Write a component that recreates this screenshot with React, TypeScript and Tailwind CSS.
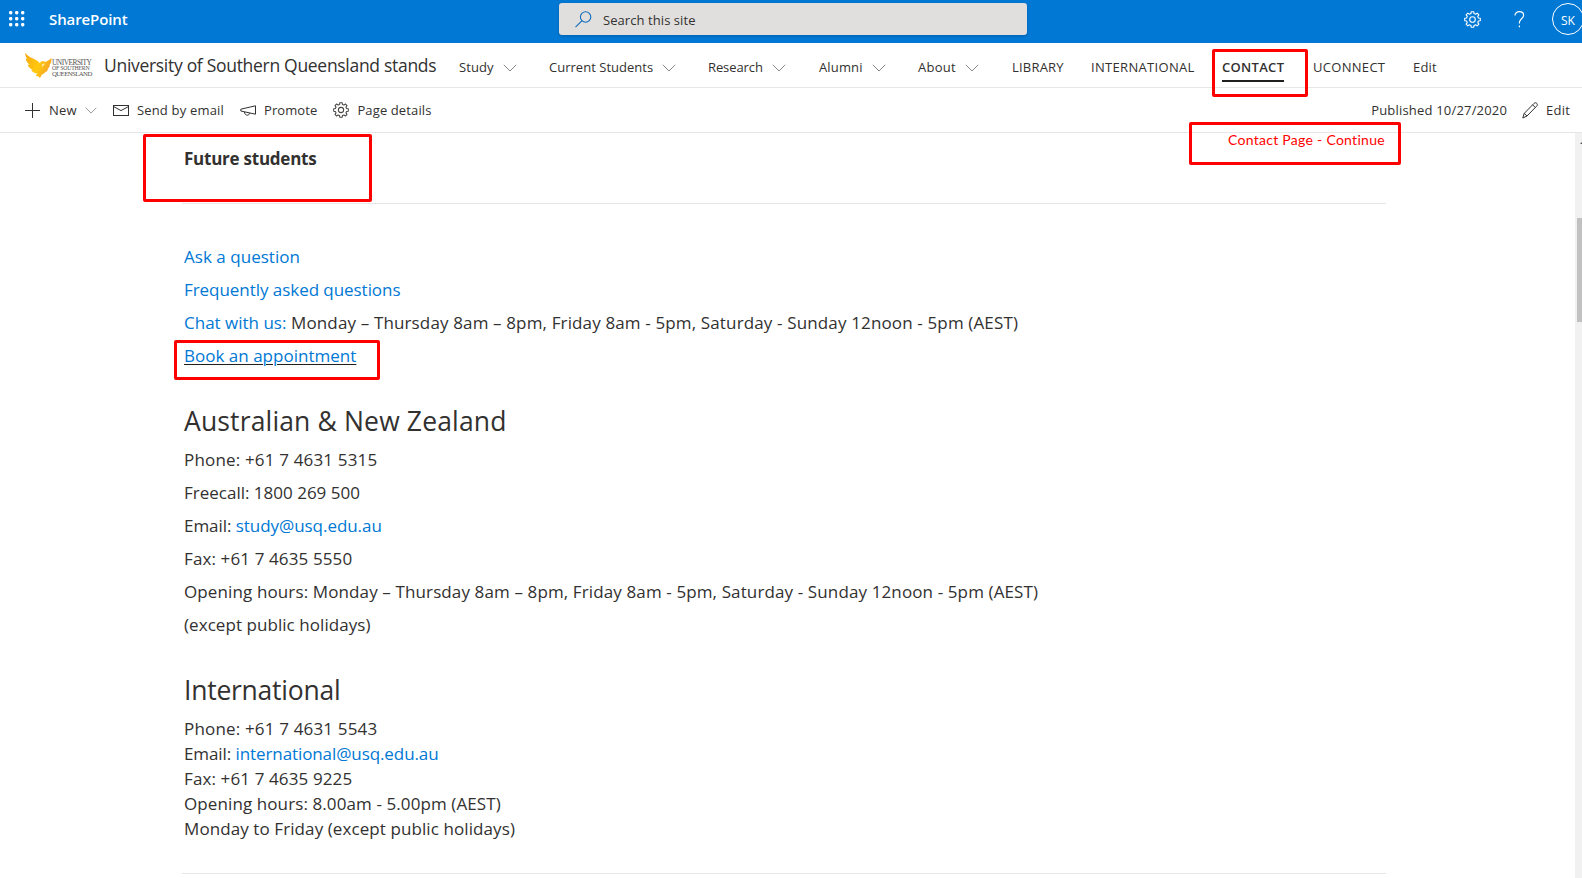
import type { ReactNode } from "react";

function Chevron({ className = "" }: { className?: string }) {
  return (
    <svg className={className} width="14" height="8" viewBox="0 0 14 8" fill="none" stroke="#8a8886" strokeWidth="1">
      <path d="M0.8 0.8 L7 7 L13.2 0.8" />
    </svg>
  );
}

function gearPath(cx: number, cy: number, outer: number, inner: number, teeth: number) {
  const points: string[] = [];
  const step = (Math.PI * 2) / teeth;
  for (let i = 0; i < teeth; i++) {
    const a = i * step - Math.PI / 2;
    const spots: [number, number][] = [
      [a - step * 0.32, inner],
      [a - step * 0.2, outer],
      [a + step * 0.2, outer],
      [a + step * 0.32, inner],
    ];
    for (const [t, r] of spots) {
      points.push(`${(cx + r * Math.cos(t)).toFixed(2)} ${(cy + r * Math.sin(t)).toFixed(2)}`);
    }
  }
  return `M${points.join("L")}Z`;
}

function Gear({ color, size, hub }: { color: string; size: number; hub: number }) {
  return (
    <svg width={size} height={size} viewBox="0 0 17 17" fill="none" stroke={color} strokeWidth="1.1" strokeLinejoin="round">
      <path d={gearPath(8.5, 8.5, 7.9, 6.1, 8)} />
      <circle cx="8.5" cy="8.5" r={hub} />
    </svg>
  );
}

function Logo() {
  return (
    <div className="flex h-[28px] w-[70px] items-center">
      <svg width="27" height="27" viewBox="0 0 28 27" className="shrink-0">
        <defs>
          <linearGradient id="phoenix" x1="0" x2="1" y1="0" y2="0.4">
            <stop offset="0" stopColor="#f7a814" />
            <stop offset="0.6" stopColor="#ffc90e" />
            <stop offset="1" stopColor="#f5a623" />
          </linearGradient>
        </defs>
        <path
          fill="url(#phoenix)"
          d="M0.2 0.3 C3 4.5 8 5.6 12.2 8.2 C13.8 9.2 15 10.2 15.6 11.4 C16 9.8 16.4 9.4 17.6 9.2 C19.2 8.8 20.6 9 21.6 9.8 C23.4 8.4 25.6 7.8 27.4 5.4 C27.8 9 26.8 11.2 25.6 12.6 C26 14.4 24.8 16 23.6 16.6 C24 18.4 22.8 19.6 21.2 20.2 C20 21.6 18.2 22.4 17.4 23 L15.6 26.4 L13.6 24.6 L11 24.4 L12.8 21.8 C9.8 21.4 7.4 20 6.4 17.8 L8 17.4 C5 16.8 3.2 14.8 2.8 12.4 L5 12.6 C2.2 10.8 0.8 8.6 0.8 6 L2.4 6.8 C0.8 4.8 0 2.6 0.2 0.3Z"
        />
        <path d="M17.4 13 C18.4 11.6 20 11.2 21 12 L19.2 12.8 L18.6 15.4Z" fill="#fff3c4" />
      </svg>
      <div className="flex flex-col whitespace-nowrap pt-[7px] font-['Liberation_Serif',serif] text-[7.4px] leading-[5.7px] text-[#55524f]">
        <span className="tracking-[-0.5px]">UNIVERSITY</span>
        <span className="text-[5.8px] tracking-[-0.22px]">OF SOUTHERN</span>
        <span className="text-[6.8px] tracking-[-0.6px]">QUEENSLAND</span>
      </div>
    </div>
  );
}

function NavItem({ label, menu = false, className }: { label: string; menu?: boolean; className: string }) {
  return (
    <div className={`flex h-full shrink-0 items-center whitespace-nowrap ${className}`}>
      <span className="pt-[2px]">{label}</span>
      {menu && <Chevron className="ml-[9px] mt-[3px]" />}
    </div>
  );
}

function Frame({ className }: { className: string }) {
  return <div className={`pointer-events-none absolute rounded-[2px] border-3 border-[#ff0000] ${className}`} />;
}

function Line({ children, className = "" }: { children: ReactNode; className?: string }) {
  return <p className={`h-[33px] leading-[33px] ${className}`}>{children}</p>;
}

const link = "text-[#0078d4]";

export default function App() {
  return (
    <div className="relative flex h-[878px] w-[1582px] flex-col overflow-hidden bg-white font-['Open_Sans',sans-serif] text-[13px] text-[#323130]">
      <header className="flex h-[43px] shrink-0 items-start bg-[#0078d4] text-white">
        <svg className="ml-[9px] mt-[11px] shrink-0" width="16" height="16" viewBox="0 0 16 16" fill="#fff">
          {[0, 6, 12].map((y) => [0, 6, 12].map((x) => <rect key={`${x}-${y}`} x={x} y={y} width="3.4" height="3.4" rx="1.4" />))}
        </svg>
        <span className="ml-[24px] w-[510px] shrink-0 text-[15px] font-semibold leading-[38px] tracking-[-0.1px]">SharePoint</span>
        <div className="mt-[3px] flex h-[32px] w-[468px] shrink-0 items-center rounded-[3px] bg-[#e1dfdd] text-[#323130] shadow-[0_1px_3px_rgba(0,0,0,0.2)]">
          <svg className="ml-[16px]" width="17" height="17" viewBox="0 0 17 17" fill="none" stroke="#0f6cbd" strokeWidth="1.1">
            <circle cx="10.6" cy="6" r="5.2" />
            <path d="M6.8 9.8 L0.5 16.2" />
          </svg>
          <span className="ml-[11px] mt-[3px] tracking-[0.07px]">Search this site</span>
        </div>
        <div className="ml-[437px] mt-[11px] shrink-0">
          <Gear color="#fff" size={17} hub={2.8} />
        </div>
        <svg className="ml-[33px] mt-[11px] shrink-0" width="11" height="17" viewBox="0 0 11 17" fill="none" stroke="#fff" strokeWidth="1.2">
          <path d="M1 4.6 C1 2 2.8 0.7 5.3 0.7 C8 0.7 9.6 2.2 9.6 4.3 C9.6 7.6 5.4 7.8 5.4 11.4 V12.4" />
          <path d="M5.4 14.6 V16.2" />
        </svg>
        <div className="ml-[27px] mt-[3px] flex size-[32px] shrink-0 items-center justify-center rounded-full border border-white pt-[3px] text-[12px]">
          SK
        </div>
      </header>

      <nav className="flex h-[45px] shrink-0 items-center border-b border-[#e6e6e6] pl-[25px]">
        <Logo />
        <span className="ml-[9px] w-[355px] shrink-0 whitespace-nowrap pt-px text-[17.5px] tracking-[-0.3px]">
          University of Southern Queensland stands
        </span>
        <div className="flex h-[43px] pt-[3px]">
          <NavItem label="Study" menu className="w-[90px] tracking-[0.1px]" />
          <NavItem label="Current Students" menu className="w-[159px] tracking-[0.02px]" />
          <NavItem label="Research" menu className="w-[111px] tracking-[-0.1px]" />
          <NavItem label="Alumni" menu className="w-[99px] tracking-[0.15px]" />
          <NavItem label="About" menu className="w-[94px] tracking-[0.25px]" />
          <NavItem label="LIBRARY" className="w-[79px] tracking-[0.2px]" />
          <NavItem label="INTERNATIONAL" className="w-[131px] tracking-[0.32px]" />
          <div className="flex h-full w-[91px] shrink-0 flex-col items-start pt-[10px] font-semibold tracking-[0.3px]">
            <span className="border-b-2 border-[#201f1e] pb-[3px] leading-[20px]">CONTACT</span>
          </div>
          <NavItem label="UCONNECT" className="w-[100px] tracking-[0.3px]" />
          <NavItem label="Edit" className="tracking-[0.2px]" />
        </div>
      </nav>

      <div className="flex h-[45px] shrink-0 items-center border-b border-[#e6e6e6] pl-[25px] pr-[12px]">
        <svg width="15" height="15" viewBox="0 0 15 15" stroke="#323130" strokeWidth="1">
          <path d="M7.5 0 V15 M0 7.5 H15" />
        </svg>
        <span className="ml-[9px] pt-[2px] tracking-[0.25px]">New</span>
        <Chevron className="ml-[8px] h-[7px] w-[12px]" />
        <svg className="ml-[16px]" width="16" height="11" viewBox="0 0 16 11" fill="none" stroke="#323130" strokeWidth="1">
          <rect x="0.5" y="0.5" width="15" height="10" />
          <path d="M0.6 1.6 L8 5.6 L15.4 1.6" />
        </svg>
        <span className="ml-[8px] pt-[2px] tracking-[0.18px]">Send by email</span>
        <svg className="ml-[16px]" width="17" height="11" viewBox="0 0 17 11" fill="none" stroke="#323130" strokeWidth="1">
          <path d="M15.5 0.8 V9.2 L0.8 6 V4.2 Z" />
          <path d="M4.4 7 C4.6 9 5.8 10.2 7.4 10.2 C8.4 10.2 9.2 9.6 9.6 8.2" />
        </svg>
        <span className="ml-[7px] pt-[2px] tracking-[0.1px]">Promote</span>
        <div className="ml-[16px]">
          <Gear color="#484644" size={16} hub={2.8} />
        </div>
        <span className="ml-[8px] pt-[2px] tracking-[0.12px]">Page details</span>
        <span className="ml-auto pt-[2px] tracking-[0.19px]">Published 10/27/2020</span>
        <svg className="ml-[15px]" width="16" height="17" viewBox="0 0 16 17" fill="none" stroke="#323130" strokeWidth="1">
          <path d="M0.8 16 L2.2 11.4 L12 1.4 C13 0.5 14.2 0.6 14.8 1.4 C15.6 2.2 15.5 3.2 14.6 4.2 L5 14 Z" />
          <path d="M10.6 2.8 L13.4 5.6 M2.2 11.4 L5 14" />
        </svg>
        <span className="ml-[8px] pt-[2px] tracking-[0.2px]">Edit</span>
      </div>

      <div className="flex min-h-0 flex-1">
        <main className="flex-1 pl-[182px] text-[17px]">
          <div className="w-[1204px]">
            <h2 className="h-[71px] border-b border-[#e6e6e6] pl-[2px] pt-[14px] text-[17px] font-bold leading-[24px] tracking-[-0.24px]">
              Future students
            </h2>
            <section className="pl-[2px] pt-[36px]">
              <Line className="tracking-[0.03px]">
                <a className={link}>Ask a question</a>
              </Line>
              <Line className="tracking-[-0.05px]">
                <a className={link}>Frequently asked questions</a>
              </Line>
              <Line className="tracking-[0.14px]">
                <a className={`${link} tracking-[0px]`}>Chat with us:</a> Monday – Thursday 8am – 8pm, Friday 8am - 5pm, Saturday -
                Sunday 12noon - 5pm (AEST)
              </Line>
              <Line className="tracking-[0.01px]">
                <a className={`${link} underline decoration-[#201f1e] decoration-1 underline-offset-2`}>Book an appointment</a>
              </Line>
              <h3 className="mt-[31px] h-[40px] text-[26.5px] leading-[36px] tracking-[0.15px]">Australian &amp; New Zealand</h3>
              <Line className="tracking-[0.17px]">Phone: +61 7 4631 5315</Line>
              <Line>Freecall: 1800 269 500</Line>
              <Line className="tracking-[-0.05px]">
                Email: <a className={link}>study@usq.edu.au</a>
              </Line>
              <Line className="tracking-[0.12px]">Fax: +61 7 4635 5550</Line>
              <Line className="tracking-[0.12px]">
                Opening hours: Monday – Thursday 8am – 8pm, Friday 8am - 5pm, Saturday - Sunday 12noon - 5pm (AEST)
              </Line>
              <Line className="tracking-[0.06px]">(except public holidays)</Line>
              <h3 className="mt-[31px] h-[44px] text-[26.5px] leading-[36px] tracking-[-0.24px]">International</h3>
              <div className="leading-[25px]">
                <p className="tracking-[0.17px]">Phone: +61 7 4631 5543</p>
                <p className="tracking-[-0.09px]">
                  Email: <a className={link}>international@usq.edu.au</a>
                </p>
                <p className="tracking-[0.12px]">Fax: +61 7 4635 9225</p>
                <p className="tracking-[0.1px]">Opening hours: 8.00am - 5.00pm (AEST)</p>
                <p className="tracking-[0.09px]">Monday to Friday (except public holidays)</p>
              </div>
            </section>
            <div className="mt-[32px] h-px bg-[#e6e6e6]" />
          </div>
        </main>
        <div className="flex w-[7px] shrink-0 flex-col items-end bg-[#f1f1f1]">
          <svg width="2" height="85" viewBox="0 0 2 85" fill="#505050">
            <path d="M0 11 L2 9 V11 Z" />
          </svg>
          <div className="h-[104px] w-[5px] bg-[#c1c1c1]" />
        </div>
      </div>

      <Frame className="left-[1212px] top-[49px] h-[48px] w-[96px]" />
      <Frame className="left-[1189px] top-[122px] h-[43px] w-[212px]" />
      <Frame className="left-[143px] top-[134px] h-[68px] w-[229px]" />
      <Frame className="left-[174px] top-[340px] h-[40px] w-[206px]" />
      <span className="absolute left-[1228px] top-[130px] whitespace-nowrap font-['Lato',sans-serif] text-[14px] leading-[20px] tracking-[0.28px] text-[#ff0000]">
        Contact Page - Continue
      </span>
    </div>
  );
}
